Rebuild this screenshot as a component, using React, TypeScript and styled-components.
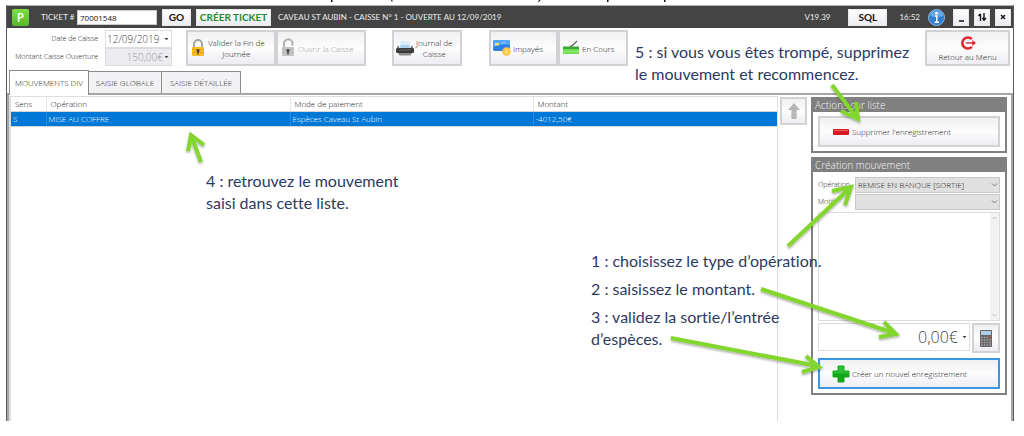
import React from "react";
import styled, { createGlobalStyle, css } from "styled-components";

const GlobalStyle = createGlobalStyle`
  *, *::before, *::after { box-sizing: border-box; }
  body { margin: 0; background: #fff; }
  body, button, input, select, textarea {
    font-family: "Open Sans", "Noto Sans", sans-serif;
    font-size: 8px;
    font-weight: 300;
    line-height: 12px;
  }
`;

const Page = styled.div`
  position: relative;
  display: flex;
  flex-direction: column;
  min-height: 100vh;
  padding: 0 10px 15px 6px;
  overflow: hidden;
`;

const CutLine = styled.svg`
  display: block;
  width: 720px;
  height: 5px;
`;

const Window = styled.main`
  flex: 1;
  display: flex;
  flex-direction: column;
  border: 1px solid #5a5a5a;
  border-top-color: #a9b3a9;
  border-bottom: 0;
`;

const TitleBar = styled.header`
  display: flex;
  align-items: center;
  height: 22px;
  padding: 0 2px 0 5px;
  background: #444;
  color: #ececec;
  font-family: Lato, "Open Sans", sans-serif;
  font-weight: 400;
`;

const Logo = styled.span`
  width: 17px;
  height: 17px;
  border-radius: 2px;
  background: linear-gradient(#7fdc45, #55b92a);
  color: #fff;
  font-family: "Open Sans", sans-serif;
  font-size: 12px;
  font-weight: 600;
  line-height: 17px;
  text-align: center;
`;

const TicketLabel = styled.label`
  display: grid;
  grid-template-columns: 36px 80px;
  align-items: center;
  margin-left: 12px;
  white-space: nowrap;
`;

const TicketInput = styled.input`
  width: 80px;
  height: 15px;
  padding: 0 2px;
  border: 1px solid #ccc;
  background: #fff;
  color: #111;
  font-weight: 400;
`;

const BarButton = styled.button<{ $w: number; $green?: boolean }>`
  display: flex;
  align-items: center;
  justify-content: center;
  width: ${(p) => p.$w}px;
  height: 17px;
  padding: 0;
  margin-left: 5px;
  border: 1px solid #e8e8e8;
  background: linear-gradient(#fff, #ececf1);
  color: ${(p) => (p.$green ? "#1f8a2c" : "#111")};
  font-family: Lato, "Open Sans", sans-serif;
  font-size: 10px;
  font-weight: 700;
  white-space: nowrap;
`;

const BarTitle = styled.span`
  flex: 1;
  margin-left: 7px;
  white-space: nowrap;
`;

const BarText = styled.span<{ $after: number }>`
  margin: 0 ${(p) => p.$after}px 0 12px;
`;

const Info = styled.svg`
  width: 17px;
  height: 17px;
  margin-right: 3px;
`;

const Toolbar = styled.div`
  display: flex;
  align-items: flex-start;
  height: 42px;
  padding: 2px 3px 0 2px;
`;

const Fields = styled.div`
  display: grid;
  grid-template-columns: 89px 67px;
  column-gap: 7px;
  grid-auto-rows: 18px;
  align-items: center;
  margin-right: 14px;
`;

const FieldLabel = styled.label`
  color: #222;
  text-align: right;
  white-space: nowrap;
  font-size: 7px;
`;

const Combo = styled.div<{ $off?: boolean }>`
  display: flex;
  align-items: center;
  min-width: 0;
  height: 18px;
  padding-right: 2px;
  border: 1px solid #dcdce0;
  background: ${(p) => (p.$off ? "#ececf0" : "#fff")};
`;

const ComboInput = styled.input`
  flex: 1;
  min-width: 0;
  height: 16px;
  padding: 0 1px;
  border: 0;
  background: transparent;
  color: #444;
  font-size: 10px;
  &:disabled { color: #98989c; text-align: right; }
`;

const face = css`
  border: 2px solid #d2d2d4;
  background: linear-gradient(#f0f0f3, #fdfdfd 50%, #ededf2);
  color: #222;
`;

const ToolButton = styled.button<{ $w: number; $gap?: number; $column?: boolean }>`
  ${face}
  display: flex;
  flex-direction: ${(p) => (p.$column ? "column" : "row")};
  align-items: center;
  justify-content: ${(p) => (p.$column ? "center" : "flex-start")};
  gap: ${(p) => (p.$column ? 0 : 2)}px;
  width: ${(p) => p.$w}px;
  height: 36px;
  padding: 0 2px;
  margin-left: ${(p) => p.$gap ?? 0}px;
  line-height: 11px;
  &:disabled { color: #a0a0a0; }
  span { white-space: pre; }
`;

const Spacer = styled.div`
  flex: 1;
`;

const Tabs = styled.nav`
  display: flex;
  align-items: flex-end;
  height: 23px;
  padding-left: 2px;
`;

const Tab = styled.button<{ $on?: boolean; $w: number }>`
  position: relative;
  width: ${(p) => p.$w}px;
  height: ${(p) => (p.$on ? 25 : 22)}px;
  margin-bottom: ${(p) => (p.$on ? -2 : 0)}px;
  padding: 0;
  border: 1px solid #8c8c8c;
  border-bottom: 0;
  margin-right: -1px;
  background: ${(p) => (p.$on ? "#fff" : "#f2f2f4")};
  color: #222;
  white-space: nowrap;
`;

const Panel = styled.section`
  flex: 1;
  display: flex;
  border: 2px solid #a6a6a6;
  border-bottom: 0;
`;

const List = styled.div`
  flex: 1;
  margin-top: 1px;
  border: solid #dedede;
  border-width: 1px 1px 0 2px;
`;

const Table = styled.table`
  width: 100%;
  table-layout: fixed;
  border-collapse: collapse;
  th, td {
    height: 15px;
    padding: 0 0 0 2px;
    font-weight: 300;
    text-align: left;
    white-space: nowrap;
    border-right: 1px solid #e6e6e6;
    border-bottom: 1px solid #d4d4d4;
    color: #222;
  }
  th { height: 14px; padding-left: 4px; }
  td { background: #0078d7; color: #fff; border-right-color: #2b8ade; }
  th:last-child, td:last-child { border-right: 0; }
`;

const UpButton = styled.button`
  ${face}
  flex: none;
  display: flex;
  align-items: center;
  justify-content: center;
  width: 27px;
  height: 28px;
  margin: 2px 4px 0 2px;
  padding: 0;
`;

const Side = styled.aside`
  flex: none;
  display: flex;
  flex-direction: column;
  gap: 4px;
  width: 196px;
  margin: 2px 4px 0 0;
`;

const Group = styled.section`
  padding: 0 5px 4px;
  border: 2px solid #808080;
  border-top: 0;
`;

const GroupTitle = styled.h2`
  height: 15px;
  margin: 0 -5px 4px;
  padding-left: 2px;
  background: #808080;
  color: #f4f4f4;
  font-size: 10px;
  font-weight: 300;
  line-height: 16px;
`;

const WideButton = styled.button<{ $focus?: boolean }>`
  ${face}
  display: flex;
  align-items: center;
  gap: 2px;
  width: 100%;
  height: 31px;
  padding: 0 0 0 12px;
  ${(p) => p.$focus && "border-color: #3c96e6;"}
`;

const FormRow = styled.div`
  display: grid;
  grid-template-columns: 37px 1fr;
  align-items: center;
  height: 17px;
  color: #222;
  label { font-size: 7px; }
`;

const SelectBox = styled.div`
  position: relative;
  height: 16px;
  svg { position: absolute; right: 2px; top: 5px; }
`;

const Select = styled.select`
  appearance: none;
  display: block;
  width: 100%;
  height: 16px;
  padding: 0 2px;
  border: 1px solid #c8c8c8;
  border-radius: 0;
  background: #e0e0e0;
  color: #111;
`;

const MemoBox = styled.div`
  display: flex;
  height: 109px;
  margin-top: 2px;
  border: 1px solid #dcdcdc;
`;

const Memo = styled.textarea`
  flex: 1;
  min-width: 0;
  border: 0;
  padding: 2px;
  resize: none;
  background: #fff;
`;

const ScrollTrack = styled.div`
  display: flex;
  flex-direction: column;
  justify-content: space-between;
  align-items: center;
  width: 9px;
  padding: 3px 0;
  background: #f2f2f2;
`;

const AmountRow = styled.div`
  display: flex;
  gap: 2px;
  margin: 2px 0 5px;
`;

const AmountBox = styled(Combo)`
  flex: 1;
  height: 28px;
`;

const AmountInput = styled(ComboInput)`
  height: 26px;
  padding-right: 4px;
  font-size: 16px;
  text-align: right;
`;

const CalcButton = styled.button`
  ${face}
  display: flex;
  flex: none;
  align-items: center;
  justify-content: center;
  width: 28px;
  height: 30px;
  padding: 0;
`;

const Note = styled.p<{ $x: number; $y: number }>`
  position: absolute;
  left: ${(p) => p.$x}px;
  top: ${(p) => p.$y}px;
  margin: 0;
  color: #2b3a64;
  font-family: Lato, "Open Sans", sans-serif;
  font-size: 16px;
  font-weight: 400;
  line-height: 22px;
  font-variant-ligatures: none;
  white-space: pre;
  pointer-events: none;
`;

const Arrows = styled.svg`
  position: absolute;
  left: 0;
  top: 0;
  width: 1024px;
  height: 436px;
  pointer-events: none;
`;

const Caret = () => (
  <svg width="5" height="4" viewBox="0 0 5 4"><path d="M.5 1h4L2.500 3.300z" fill="#444" /></svg>
);

const Chevron = () => (
  <svg width="7" height="6" viewBox="0 0 7 6"><path d="M1 1.500l2.500 2.500L6 1.500" fill="none" stroke="#777" /></svg>
);

const Lock = ({ open }: { open?: boolean }) => (
  <svg width="16" height="20" viewBox="-1 0 16 20">
    <path
      d={open ? "M3 9V5.500a4 4 0 0 1 8.500 0V7.500" : "M3 10V6a4 4 0 0 1 8 0v4"}
      fill="none" stroke={open ? "#b0b0b0" : "#a4a4a4"} strokeWidth="2"
    />
    <rect x="1" y="9" width="12" height="9" rx="1" fill={open ? "#c4c4c4" : "#f9bd22"} />
    <path d="M1 11.500h12M1 14.500h12" stroke={open ? "#b8b8b8" : "#eba41a"} />
    <circle cx="7" cy="12.500" r="1.600" fill="#444" />
    <path d="M7 12.500v4" stroke="#444" strokeWidth="1.400" />
  </svg>
);

const Printer = () => (
  <svg width="18" height="18" viewBox="0 0 18 18">
    <path d="M3.500 9L4.500 2h9l1 7z" fill="#dcecfb" />
    <path d="M5 6h8l1 3H4z" fill="#a9d0f5" />
    <path d="M2 6l1.500 3h11L16 6l1.500 4H.5z" fill="#777" />
    <rect x="0" y="9" width="18" height="5" rx="1.500" fill="#3a3a3a" />
    <path d="M2 14h14l-1.500 2.500h-11z" fill="#8c8c8c" />
    <path d="M3 11h12" stroke="#666" />
  </svg>
);

const Card = () => (
  <svg width="18" height="18" viewBox="0 0 18 18">
    <rect x="0" y="1" width="17" height="11" rx="1.500" fill="#2f80e4" />
    <path d="M0 3Q0 1 1.500 1h14Q17 1 17 3v3Q8 4 0 8z" fill="#55a8f6" />
    <rect x="2" y="4" width="4" height="2.500" fill="#fbe36a" />
    <path d="M8 4h5" stroke="#9ccbfa" />
    <circle cx="13.500" cy="12.500" r="4.300" fill="#fbc742" />
    <path d="M12.500 10.500l2 2-2 2" fill="none" stroke="#ffe388" strokeWidth="1.200" />
  </svg>
);

const Till = () => (
  <svg width="18" height="18" viewBox="0 0 18 18">
    <path d="M8 7.500l2.500-1L15 2" fill="none" stroke="#666" strokeWidth="1.400" />
    <path d="M1 7.500h16V10H1z" fill="#3aa436" />
    <path d="M1 10h16v5H1z" fill="#6fe052" />
    <path d="M1 12.500h16" stroke="#94ec78" />
  </svg>
);

const Exit = () => (
  <svg width="18" height="16" viewBox="0 0 18 16">
    <path d="M12.800 4.200A5.500 5.500 0 1 0 12.800 11.800" fill="none" stroke="#e0262c" strokeWidth="2.600" />
    <path d="M6.500 7h6.500V4.500L17.500 8 13 11.500V9H6.500z" fill="#e0262c" stroke="#fff" strokeWidth=".6" />
  </svg>
);

const Calculator = () => (
  <svg width="14" height="19" viewBox="0 0 14 19">
    <rect x="1" y="1" width="12" height="17" rx="1" fill="#666" />
    <rect x="2" y="2" width="10" height="4" fill="#a9cdea" />
    <path d="M2 8.500h10M2 11h10M2 13.500h10M2 16h10" stroke="#a4a4a4" strokeWidth="1.500" strokeDasharray="1.600 1.200" />
    <rect x="10" y="7.800" width="2" height="1.500" fill="#d03838" />
  </svg>
);

const arrowLines = [
  "M832 85L857 118M841 111L858 119L856 102",
  "M201 162L191 135M188 151L191 135L204 145",
  "M788 246L851 187M832 191L851 187L845 205",
  "M761 289L894 333M879 337L896 334L884 322",
  "M671 338L818 366M802 372L819 367L806 356",
];

export default function App() {
  return (
    <>
      <GlobalStyle />
      <Page>
        <CutLine viewBox="6 0 720 5" aria-hidden="true">
          <path d="M331 0h1.500v2h-1.500zM391 0h1l1 1.500h-1.500zM539 0h1.500l-1.500 2h-1zM607 0h1.500v2h-1.500zM664 0h1.500v2h-1.500z" fill="#111" />
        </CutLine>
        <Window>
          <TitleBar>
            <Logo>P</Logo>
            <TicketLabel>TICKET #<TicketInput defaultValue="70001548" /></TicketLabel>
            <BarButton $w={29}>GO</BarButton>
            <BarButton $w={75} $green>CRÉER TICKET</BarButton>
            <BarTitle>CAVEAU ST AUBIN - CAISSE N° 1 - OUVERTE AU 12/09/2019</BarTitle>
            <BarText $after={13}>V19.39</BarText>
            <BarButton $w={39}>SQL</BarButton>
            <BarText $after={8}>16:52</BarText>
            <Info viewBox="0 0 17 17" role="img" aria-label="Info">
              <circle cx="8.500" cy="8.500" r="8" fill="#2f7fd0" stroke="#8fbcea" />
              <path d="M2 7a6.500 5.500 0 0 1 13 0Q8 9 2 7z" fill="#69a8e4" />
              <circle cx="8.500" cy="4.300" r="1.300" fill="#fff" />
              <path d="M7 7h1.800v6M6.500 13.200h4.500" fill="none" stroke="#fff" strokeWidth="1.400" />
            </Info>
            <BarButton $w={16} aria-label="Réduire">
              <svg width="7" height="9" viewBox="0 0 7 9"><path d="M1 8h5" stroke="#111" strokeWidth="1.500" /></svg>
            </BarButton>
            <BarButton $w={16} aria-label="Basculer">
              <svg width="9" height="8" viewBox="0 0 9 8">
                <path d="M2.500 8V1M.5 3l2-2.200M6 0v7M4.500 5L6 7.200 8 5" fill="none" stroke="#111" strokeWidth="1.400" />
              </svg>
            </BarButton>
            <BarButton $w={16} aria-label="Fermer">
              <svg width="6" height="6" viewBox="0 0 6 6"><path d="M1 1l4 4M5 1L1 5" stroke="#111" strokeWidth="1.400" /></svg>
            </BarButton>
          </TitleBar>

          <Toolbar>
            <Fields>
              <FieldLabel htmlFor="date">Date de Caisse</FieldLabel>
              <Combo><ComboInput id="date" defaultValue="12/09/2019" /><Caret /></Combo>
              <FieldLabel htmlFor="opening">Montant Caisse Ouverture</FieldLabel>
              <Combo $off><ComboInput id="opening" defaultValue="150,00€" disabled /><Caret /></Combo>
            </Fields>
            <ToolButton $w={90}><Lock /><span>{"Valider la Fin de\nJournée"}</span></ToolButton>
            <ToolButton $w={90} disabled><Lock open /><span>Ouvrir la Caisse</span></ToolButton>
            <ToolButton $w={70} $gap={26}><Printer /><span>{"Journal de\nCaisse"}</span></ToolButton>
            <ToolButton $w={69} $gap={27}><Card /><span>Impayés</span></ToolButton>
            <ToolButton $w={70}><Till /><span>En Cours</span></ToolButton>
            <Spacer />
            <ToolButton $w={85} $column><Exit /><span>Retour au Menu</span></ToolButton>
          </Toolbar>

          <Tabs>
            <Tab $on $w={80}>MOUVEMENTS DIV</Tab>
            <Tab $w={74}>SAISIE GLOBALE</Tab>
            <Tab $w={80}>SAISIE DÉTAILLÉE</Tab>
          </Tabs>

          <Panel>
            <List>
              <Table>
                <colgroup><col style={{ width: 35 }} /><col style={{ width: 244 }} /><col style={{ width: 243 }} /><col /></colgroup>
                <thead><tr><th>Sens</th><th>Opération</th><th>Mode de paiement</th><th>Montant</th></tr></thead>
                <tbody><tr><td>S</td><td>MISE AU COFFRE</td><td>Espèces Caveau St Aubin</td><td>-4012,50€</td></tr></tbody>
              </Table>
            </List>
            <UpButton aria-label="Monter">
              <svg width="14" height="18" viewBox="0 0 14 18">
                <path d="M7 1l6 7H9.500v9h-5V8H1z" fill="#b4b4b6" />
                <path d="M4 11h6M4 14h6" stroke="#c4c4c6" />
              </svg>
            </UpButton>
            <Side>
              <Group>
                <GroupTitle>Actions sur liste</GroupTitle>
                <WideButton>
                  <svg width="18" height="18" viewBox="0 0 18 18">
                    <rect x="1" y="6" width="16" height="6" rx="1" fill="#d81820" />
                    <path d="M2 7.500h14" stroke="#f06468" />
                  </svg>
                  Supprimer l'enregistrement
                </WideButton>
              </Group>
              <Group>
                <GroupTitle>Création mouvement</GroupTitle>
                <FormRow>
                  <label htmlFor="operation">Opération</label>
                  <SelectBox>
                    <Select id="operation"><option>REMISE EN BANQUE [SORTIE]</option></Select>
                    <Chevron />
                  </SelectBox>
                </FormRow>
                <FormRow>
                  <label htmlFor="motif">Motif</label>
                  <SelectBox><Select id="motif"><option></option></Select><Chevron /></SelectBox>
                </FormRow>
                <MemoBox>
                  <Memo aria-label="Commentaire" />
                  <ScrollTrack>
                    <svg width="5" height="4" viewBox="0 0 5 4"><path d="M.5 3l2-2 2 2" fill="none" stroke="#bbb" /></svg>
                    <svg width="5" height="4" viewBox="0 0 5 4"><path d="M.5 1l2 2 2-2" fill="none" stroke="#bbb" /></svg>
                  </ScrollTrack>
                </MemoBox>
                <AmountRow>
                  <AmountBox><AmountInput aria-label="Montant" defaultValue="0,00€" /><Caret /></AmountBox>
                  <CalcButton aria-label="Calculatrice"><Calculator /></CalcButton>
                </AmountRow>
                <WideButton $focus>
                  <svg width="18" height="18" viewBox="0 0 18 18">
                    <path d="M6 1h6v5h5v6h-5v5H6v-5H1V6h5z" fill="#12a818" stroke="#12a818" strokeLinejoin="round" />
                    <path d="M6.500 1.500h5v5h5v2h-15v-2h5z" fill="#2cc032" />
                  </svg>
                  Créer un nouvel enregistrement
                </WideButton>
              </Group>
            </Side>
          </Panel>
        </Window>

        <Note $x={635} $y={41}>{"5 : si vous vous êtes trompé, supprimez\nle mouvement et recommencez."}</Note>
        <Note $x={206} $y={170}>{"4 : retrouvez le mouvement\nsaisi dans cette liste."}</Note>
        <Note $x={591} $y={250}>1 : choisissez le type d’opération.</Note>
        <Note $x={591} $y={278}>2 : saisissez le montant.</Note>
        <Note $x={591} $y={306}>{"3 : validez la sortie/l’entrée\nd’espèces."}</Note>
        <Arrows viewBox="0 0 1024 436" aria-hidden="true">
          <defs>
            <filter id="shade" x="-10%" y="-10%" width="120%" height="130%">
              <feDropShadow dx="0" dy="1.500" stdDeviation="1.200" floodOpacity=".35" />
            </filter>
          </defs>
          <g fill="none" stroke="#82d62e" strokeWidth="4" filter="url(#shade)">
            {arrowLines.map((d) => <path key={d} d={d} />)}
          </g>
        </Arrows>
      </Page>
    </>
  );
}
